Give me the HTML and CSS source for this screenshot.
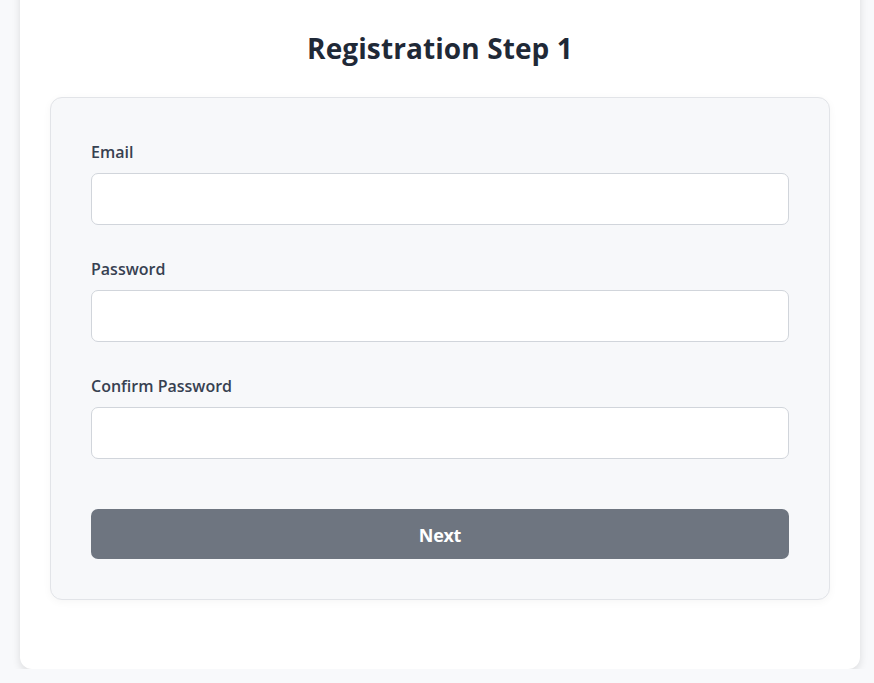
FILE: index.html
```html
<!DOCTYPE html>
<html lang="en">
<head>
<meta charset="utf-8">
<title>Registration Step 1</title>
<link rel="stylesheet" href="styles.css">
</head>
<body>
<div class="page">
  <div class="card">
    <h1 class="title">Registration Step 1</h1>
    <form class="panel">
      <div class="field">
        <label class="label" for="email">Email</label>
        <input class="input" id="email" type="email">
      </div>
      <div class="field">
        <label class="label" for="pw">Password</label>
        <input class="input" id="pw" type="password">
      </div>
      <div class="field">
        <label class="label" for="pw2">Confirm Password</label>
        <input class="input" id="pw2" type="password">
      </div>
      <button class="btn" type="button">Next</button>
    </form>
  </div>
</div>
</body>
</html>
```
FILE: styles.css
```css
* { box-sizing: border-box; }
html, body { margin: 0; padding: 0; }
body {
  background: #f8f9fb;
  font-family: "Open Sans", "Noto Sans", sans-serif;
  color: #374151;
}
.page {
  padding: 0 14px 0 20px;
}
.card {
  margin-top: -20px;
  background: #ffffff;
  border-radius: 12px;
  box-shadow: 0 3px 8px rgba(0, 0, 0, 0.12);
  padding: 30px;
}
.title {
  margin: 20px 0 31px;
  font-size: 28px;
  line-height: 36px;
  font-weight: 700;
  text-align: center;
  color: #1f2937;
  letter-spacing: 0.1px;
}
.panel {
  margin: 0 0 39px;
  background: #f7f8fa;
  border: 1px solid #e2e4e8;
  border-radius: 12px;
  box-shadow: 0 2px 8px rgba(0, 0, 0, 0.04);
  padding: 40px;
  display: flex;
  flex-direction: column;
}
.field {
  display: flex;
  flex-direction: column;
  margin-bottom: 30px;
}
.field:last-of-type { margin-bottom: 50px; }
.label {
  font-size: 16px;
  line-height: 24px;
  padding-top: 2px;
  margin-bottom: 9px;
  font-weight: 600;
  color: #374151;
  letter-spacing: 0;
}
.input {
  height: 52px;
  border: 1px solid #d1d5db;
  border-radius: 7px;
  background: #ffffff;
  font: inherit;
  padding: 0 14px;
}
.btn {
  height: 50px;
  border: none;
  border-radius: 7px;
  background: #6e7580;
  color: #ffffff;
  font-family: inherit;
  font-size: 18px;
  font-weight: 700;
  letter-spacing: -0.3px;
  padding-top: 2px;
}
```
